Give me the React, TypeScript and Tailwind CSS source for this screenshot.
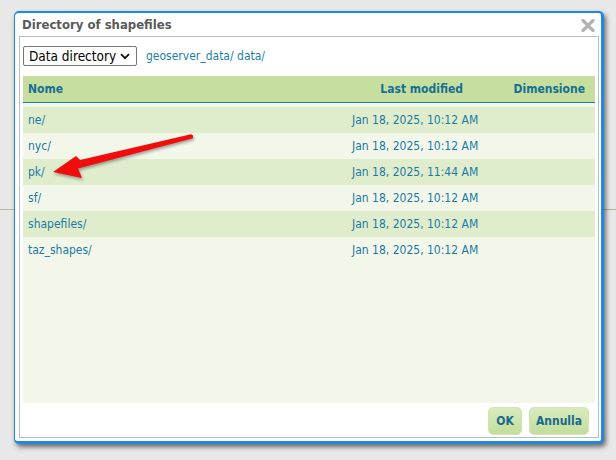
import React from "react";

const rows = [
  { name: "ne/", date: "Jan 18, 2025, 10:12 AM" },
  { name: "nyc/", date: "Jan 18, 2025, 10:12 AM" },
  { name: "pk/", date: "Jan 18, 2025, 11:44 AM" },
  { name: "sf/", date: "Jan 18, 2025, 10:12 AM" },
  { name: "shapefiles/", date: "Jan 18, 2025, 10:12 AM" },
  { name: "taz_shapes/", date: "Jan 18, 2025, 10:12 AM" },
];

export default function App() {
  return (
    <div
      className="relative w-[616px] h-[460px] overflow-hidden bg-[#e8e8e8]"
      style={{ fontFamily: "'DejaVu Sans Condensed', 'DejaVu Sans', sans-serif" }}
    >
      <div className="pt-[209px]">
        <div className="border-t border-[#aebb9c]" />
      </div>

      {/* Dialog */}
      <div className="absolute left-[14px] top-[11px] w-[590px] h-[433px] flex flex-col bg-white rounded-[5px] border-[#1e88e5] border-t-2 border-l border-r-[3px] border-b-[3px] shadow-[2px_3px_5px_rgba(0,0,0,0.55)]">
        <div className="h-[23px] flex items-center justify-between pl-[7px] pr-[6px]">
          <span className="text-[13px] font-bold text-[#5a5a5a] leading-none">Directory of shapefiles</span>
          <svg width="14" height="13" viewBox="0 0 14 13" className="mt-[2px]">
            <path d="M2 1.5 L12 11.5 M12 1.5 L2 11.5" stroke="#b3b3b3" strokeWidth="3.2" strokeLinecap="round" />
          </svg>
        </div>
        <div className="ml-[4px] mr-[2px] mb-[3px] flex-1 border border-[#bdbdbd] flex flex-col px-[3px] pt-[9px]">
          <div className="flex items-center gap-[9px] h-[20px]">
            <div className="w-[114px] h-[20px] border border-[#767676] rounded-[2px] flex items-center justify-between pl-[5px] pr-[6px] text-[13.5px] text-black">
              <span>Data directory</span>
              <svg width="10" height="7" viewBox="0 0 10 7">
                <path d="M1 1.2 L5 5.2 L9 1.2" stroke="#111" strokeWidth="1.8" fill="none" />
              </svg>
            </div>
            <span className="text-[12px] text-[#1a7fa8]">geoserver_data/ data/</span>
          </div>

          <div className="mt-[10px] w-[572px] flex flex-col">
            <div className="h-[27px] bg-[#c6df9f] border-b border-[#1b7fa0] flex items-center text-[12px] font-bold text-[#156f94]">
              <span className="pl-[5px] w-[300px]">Nome</span>
              <span className="w-[140px] text-right">Last modified</span>
              <span className="flex-1 text-right pr-[10px]">Dimensione</span>
            </div>
            <div className="h-[300px] bg-[#f3f7ea] pt-[4px] text-[12px] text-[#1b7aa5]">
              {rows.map((r, i) => (
                <div
                  key={r.name}
                  className={
                    "h-[26px] flex items-center " + (i % 2 === 0 ? "bg-[#e0edcc]" : "bg-[#f3f7ea]")
                  }
                >
                  <span className="pl-[5px] w-[329px]">{r.name}</span>
                  <span>{r.date}</span>
                </div>
              ))}
            </div>
          </div>

          <div className="flex justify-end gap-[7px] pr-[6px] mt-[4px]">
            <button className="h-[28px] w-[34px] rounded-[5px] border border-[#cfe3b3] bg-gradient-to-b from-[#d9ebbe] to-[#c3de9c] text-[12px] font-bold text-[#17698c]">
              OK
            </button>
            <button className="h-[28px] w-[60px] rounded-[5px] border border-[#cfe3b3] bg-gradient-to-b from-[#d9ebbe] to-[#c3de9c] text-[12px] font-bold text-[#17698c]">
              Annulla
            </button>
          </div>
        </div>
      </div>

      {/* Red arrow annotation */}
      <svg
        className="absolute left-0 top-0 pointer-events-none"
        width="616"
        height="460"
        style={{ filter: "drop-shadow(1px 2px 1.5px rgba(0,0,0,0.35))" }}
      >
        <polygon
          points="193,135.5 191,134.3 80,160 76,156 53,172 82,178 78,168.5 193,138.3"
          fill="#f20d0d"
          strokeLinejoin="round"
        />
      </svg>
    </div>
  );
}
